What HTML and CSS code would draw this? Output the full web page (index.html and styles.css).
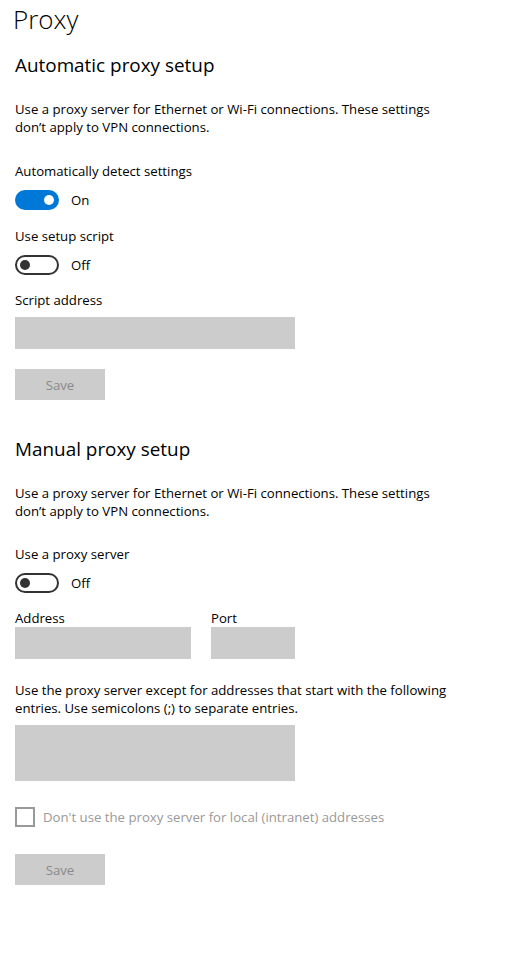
FILE: index.html
```html
<!DOCTYPE html>
<html lang="en">
<head>
<meta charset="utf-8">
<title>Proxy</title>
<link rel="stylesheet" href="styles.css">
</head>
<body>
<main class="page">
  <h1 class="title">Proxy</h1>

  <section class="section section-auto">
    <h2 class="heading">Automatic proxy setup</h2>
    <p class="desc">Use a proxy server for Ethernet or Wi-Fi connections. These settings don’t apply to VPN connections.</p>

    <div class="label label-first">Automatically detect settings</div>
    <div class="toggle-row">
      <span class="toggle toggle-on"><span class="knob"></span></span>
      <span class="toggle-text">On</span>
    </div>

    <div class="label label-next">Use setup script</div>
    <div class="toggle-row">
      <span class="toggle"><span class="knob"></span></span>
      <span class="toggle-text">Off</span>
    </div>

    <div class="label label-script">Script address</div>
    <div class="input input-script"></div>

    <button class="btn btn-save-auto" type="button" disabled>Save</button>
  </section>

  <section class="section section-manual">
    <h2 class="heading">Manual proxy setup</h2>
    <p class="desc">Use a proxy server for Ethernet or Wi-Fi connections. These settings don’t apply to VPN connections.</p>

    <div class="label label-first-m">Use a proxy server</div>
    <div class="toggle-row">
      <span class="toggle"><span class="knob"></span></span>
      <span class="toggle-text">Off</span>
    </div>

    <div class="addr-row">
      <div class="field field-address">
        <div class="field-label">Address</div>
        <div class="input"></div>
      </div>
      <div class="field field-port">
        <div class="field-label">Port</div>
        <div class="input"></div>
      </div>
    </div>

    <p class="desc desc-except">Use the proxy server except for addresses that start with the following entries. Use semicolons (;) to separate entries.</p>
    <div class="input input-area"></div>

    <div class="check-row">
      <span class="checkbox"></span>
      <span class="check-text">Don't use the proxy server for local (intranet) addresses</span>
    </div>

    <button class="btn btn-save-manual" type="button" disabled>Save</button>
  </section>
</main>
</body>
</html>
```

FILE: styles.css
```css
* { box-sizing: border-box; }

html, body {
  margin: 0;
  padding: 0;
  background: #ffffff;
}

body {
  font-family: "Open Sans", "Noto Sans", "Liberation Sans", sans-serif;
  color: #000000;
  font-size: 13.2px;
}

.page {
  padding: 0 0 0 15px;
  width: 518px;
}

.title {
  margin: 0 0 0 -2px;
  font-size: 26px;
  font-weight: 300;
  line-height: 38px;
}

.section { display: flex; flex-direction: column; align-items: flex-start; }

.heading {
  margin: 0;
  font-size: 18.9px;
  font-weight: 400;
  line-height: 28px;
}

.section-auto .heading { margin-top: 13px; }
.section-manual .heading { margin-top: 35px; }

.desc {
  margin: 21px 0 0;
  width: 436px;
  line-height: 18px;
}

.label {
  line-height: 20px;
}

.label-first { margin-top: 25px; }
.label-first-m { margin-top: 24px; }
.label-next { margin-top: 16px; }
.label-script { margin-top: 15px; }

.toggle-row {
  margin-top: 9px;
  display: flex;
  align-items: center;
  height: 20px;
  gap: 12px;
}

.toggle {
  width: 44px;
  height: 20px;
  border: 2px solid #333333;
  border-radius: 10px;
  display: flex;
  align-items: center;
  padding: 0 3px;
}

.toggle .knob {
  width: 10px;
  height: 10px;
  border-radius: 50%;
  background: #333333;
}

.toggle-on {
  background: #0078d7;
  border-color: #0078d7;
  justify-content: flex-end;
}

.toggle-on .knob { background: #ffffff; }

.toggle-text { line-height: 20px; }

.input {
  background: #cccccc;
  height: 32px;
}

.input-script {
  margin-top: 7px;
  width: 280px;
}

.btn {
  width: 90px;
  height: 31px;
  border: 0;
  padding: 0;
  background: #cccccc;
  color: #8a8a8a;
  font-family: inherit;
  font-size: 13.2px;
}

.btn-save-auto { margin-top: 20px; }
.btn-save-manual { margin-top: 27px; }

.addr-row {
  margin-top: 16px;
  display: flex;
  gap: 20px;
}

.field-label { line-height: 18px; }
.field-address { width: 176px; }
.field-port { width: 84px; }

.desc-except { margin-top: 22px; width: 452px; }

.input-area {
  margin-top: 8px;
  width: 280px;
  height: 56px;
}

.check-row {
  margin-top: 26px;
  display: flex;
  align-items: center;
  gap: 8px;
  height: 20px;
}

.checkbox {
  width: 20px;
  height: 20px;
  border: 2px solid #999999;
}

.check-text { color: #999999; line-height: 20px; }
```
